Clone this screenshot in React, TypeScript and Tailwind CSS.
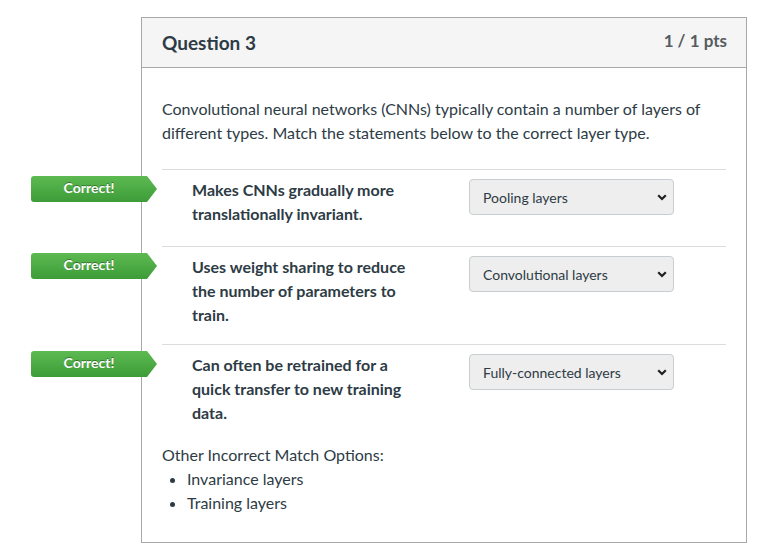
import React from "react";

const rows = [
  {
    text: "Makes CNNs gradually more translationally invariant.",
    answer: "Pooling layers",
    pb: "pb-[20px]",
  },
  {
    text: "Uses weight sharing to reduce the number of parameters to train.",
    answer: "Convolutional layers",
    pb: "pb-[17px]",
  },
  {
    text: "Can often be retrained for a quick transfer to new training data.",
    answer: "Fully-connected layers",
    pb: "pb-[18px]",
  },
];

const Chevron = () => (
  <svg width="10" height="7" viewBox="0 0 10 7" className="shrink-0">
    <path d="M1.2 1.2 L5 5 L8.8 1.2" fill="none" stroke="#1f1f1f" strokeWidth="2.2" />
  </svg>
);

const CorrectBadge = () => (
  <div className="absolute left-[-131px] top-[6px] h-[26px] w-[126px] rounded-l-[3px] bg-gradient-to-b from-[#5dba52] to-[#3d9c38] [clip-path:polygon(0_0,calc(100%-10px)_0,100%_50%,calc(100%-10px)_100%,0_100%)] flex items-center justify-center pr-[10px] pb-[4px]">
    <span className="text-white text-[14px] font-bold [text-shadow:0_-1px_0_rgba(0,0,0,0.35)]">
      Correct!
    </span>
  </div>
);

export default function App() {
  return (
    <div className="min-h-[551px] bg-white pt-[17px] pl-[141px] font-['Lato','Noto_Sans',sans-serif] text-[#2d3b45]">
      <div className="w-[606px] border border-[#a8a8a8]">
        <div className="h-[50px] bg-[#f5f5f5] border-b border-[#a8a8a8] flex items-start justify-between pl-[20px] pr-[19px]">
          <span className="mt-[11px] text-[19px] font-bold text-[#2d3b45]">Question 3</span>
          <span className="mt-[10px] text-[17px] font-bold text-[#555c61]">1 / 1 pts</span>
        </div>
        <div className="pl-[20px] pr-[20px] pt-[29px] pb-[27px]">
          <p className="text-[16px] leading-[24px] mb-[24px]">
            Convolutional neural networks (CNNs) typically contain a number of layers of different types. Match the
            statements below to the correct layer type.
          </p>
          {rows.map((r) => (
            <div key={r.answer} className={`relative border-t border-[#dcdcdc] pt-[8px] ${r.pb} flex`}>
              <CorrectBadge />
              <div className="ml-[30px] w-[230px] text-[16px] leading-[24px] font-bold">{r.text}</div>
              <div className="ml-[47px] mt-[1px] w-[205px] h-[36px] rounded-[4px] border border-[#c7cdd1] bg-[#eeeeee] flex items-center justify-between pl-[13px] pr-[6px]">
                <span className="text-[14px] text-[#2d3b45]">{r.answer}</span>
                <Chevron />
              </div>
            </div>
          ))}
          <p className="text-[16px] leading-[24px]">Other Incorrect Match Options:</p>
          <ul className="text-[16px] leading-[24px] pl-[25px] list-disc">
            <li>Invariance layers</li>
            <li>Training layers</li>
          </ul>
        </div>
      </div>
    </div>
  );
}
